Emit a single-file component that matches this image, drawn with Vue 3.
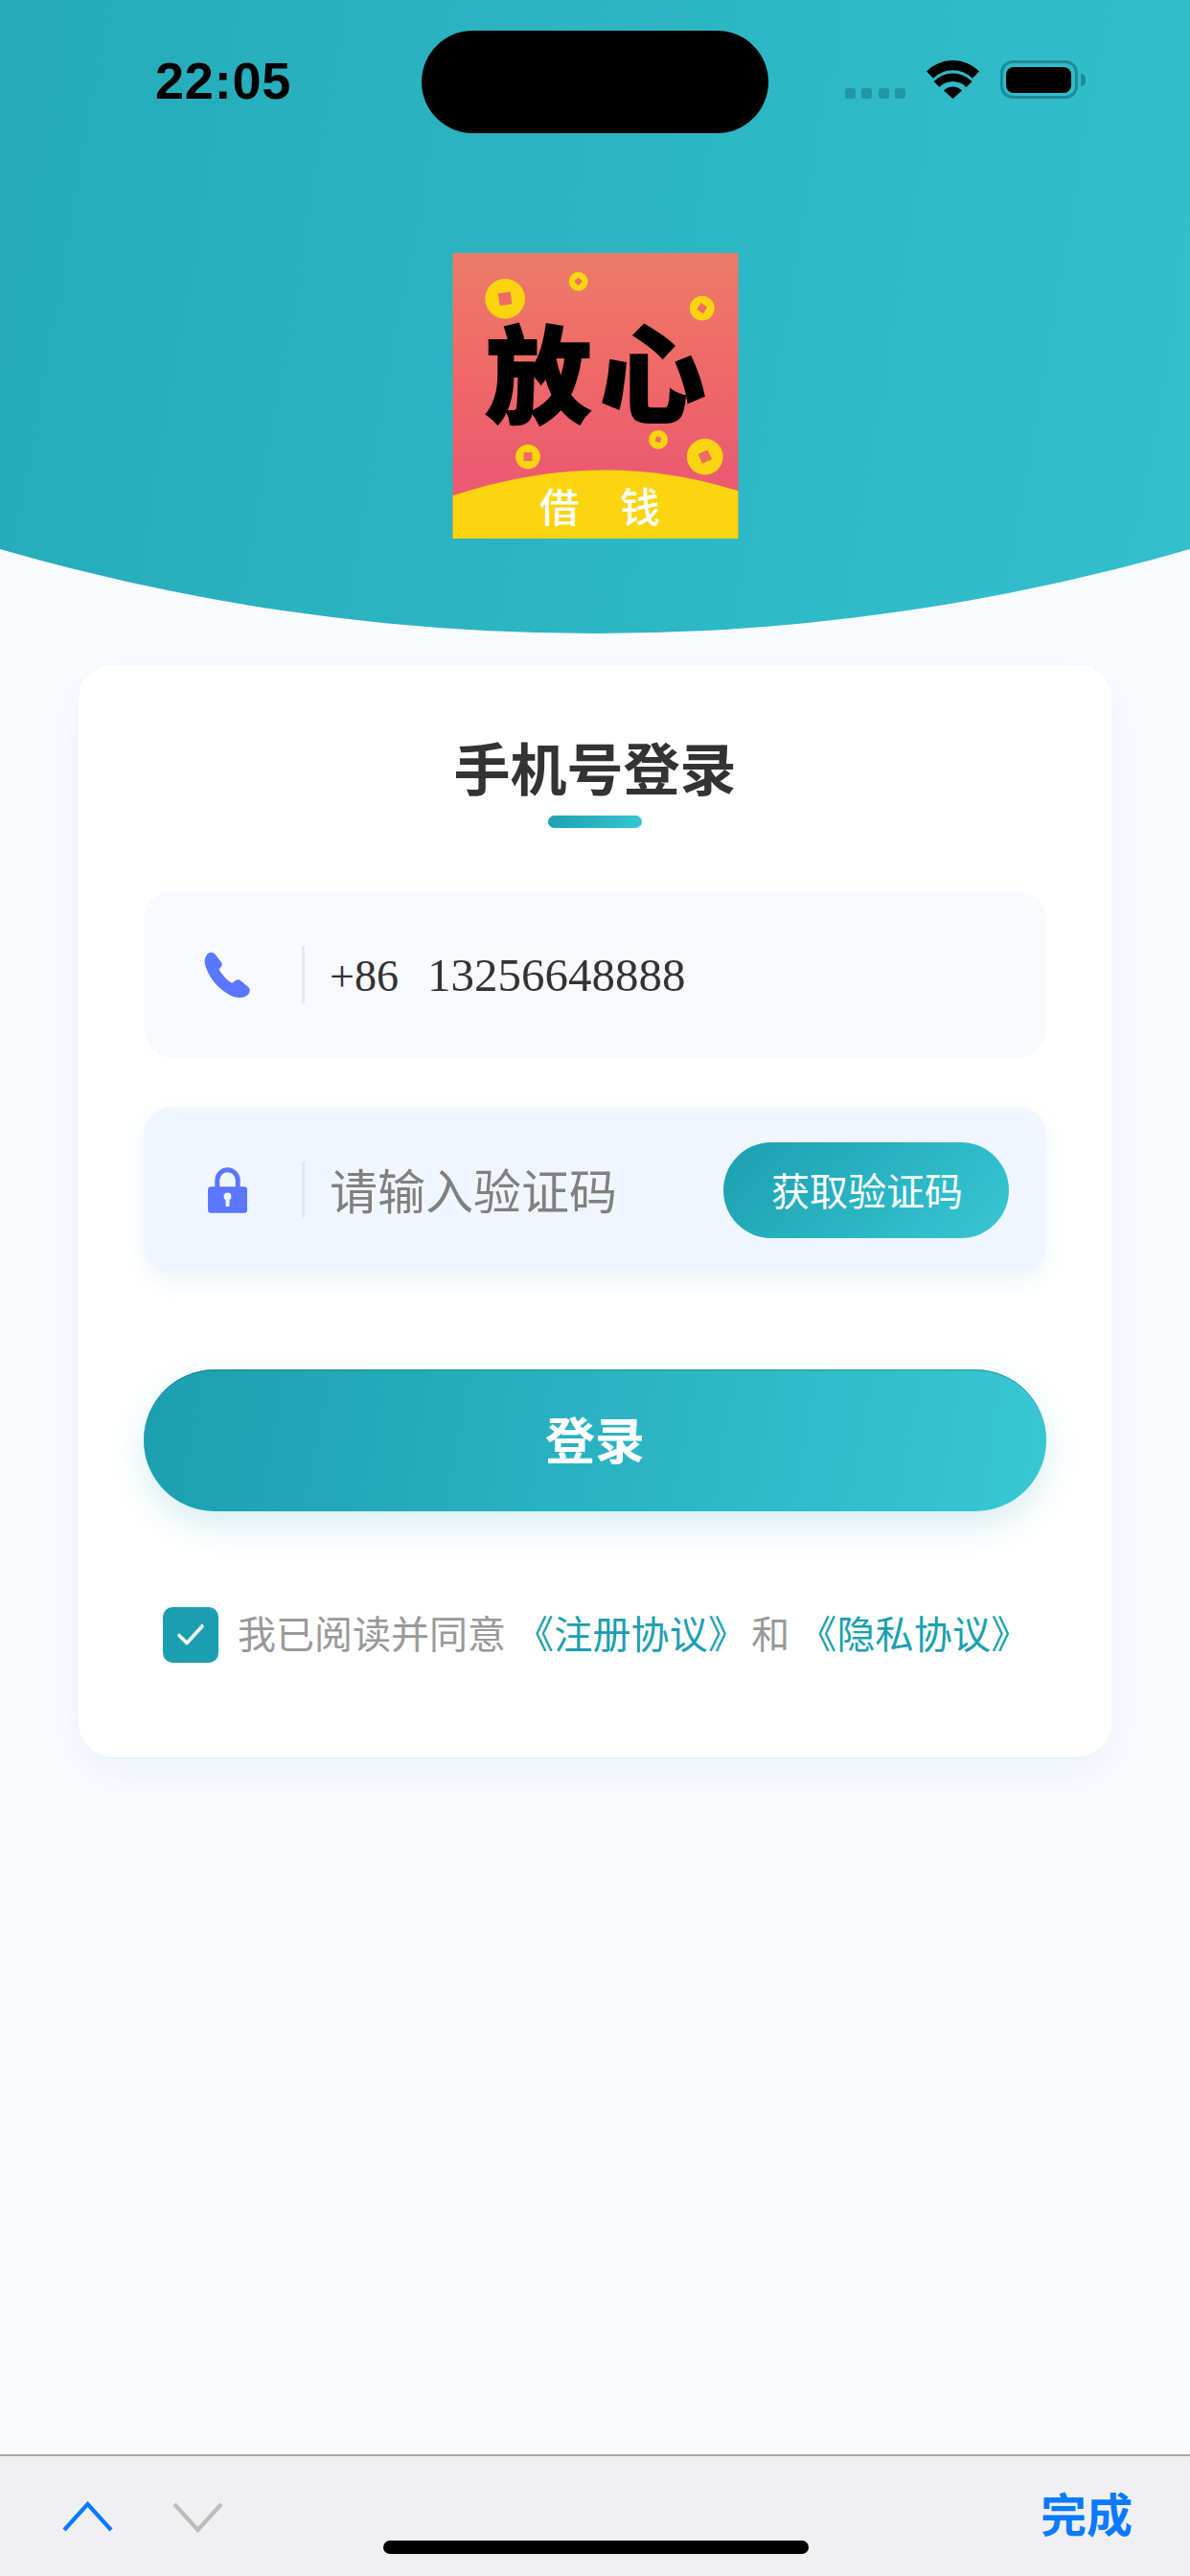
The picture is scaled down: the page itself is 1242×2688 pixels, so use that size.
<template>
  <div class="page">
    <header class="hero">
      <div class="status-bar">
        <span class="time">22:05</span>
        <div class="island"></div>
        <div class="status-icons">
          <div class="signal">
            <i v-for="n in 4" :key="n"></i>
          </div>
          <svg class="wifi" width="55" height="40" viewBox="0 0 55 40">
            <path d="M0 11.5A38.6 38.6 0 0 1 55 11.5L48 18.7A29 29 0 0 0 7 18.7Z" />
            <path d="M7.5 22A28 28 0 0 1 47.5 22L41.5 28A19.5 19.5 0 0 0 13.5 28Z" />
            <path d="M18 31.5A13.5 13.5 0 0 1 37 31.5L27.5 40Z" />
          </svg>
          <div class="battery"><div class="battery-level"></div></div>
          <div class="battery-cap"></div>
        </div>
      </div>

      <!-- app logo -->
      <svg class="logo" width="299" height="298" viewBox="0 0 300 300">
        <defs>
          <linearGradient id="logoBg" x1="0" y1="0" x2="0" y2="1">
            <stop offset="0" stop-color="#ec7b68" />
            <stop offset="0.35" stop-color="#ef6c66" />
            <stop offset="0.75" stop-color="#ec5b70" />
            <stop offset="1" stop-color="#ec5b70" />
          </linearGradient>
        </defs>
        <rect width="300" height="300" fill="url(#logoBg)" />
        <g v-for="coin in coins" :key="coin.x">
          <circle :cx="coin.x" :cy="coin.y" :r="coin.r" fill="#fad40e" />
          <rect
            :x="coin.x - coin.hole / 2"
            :y="coin.y - coin.hole / 2"
            :width="coin.hole"
            :height="coin.hole"
            :transform="`rotate(${coin.rot} ${coin.x} ${coin.y})`"
            fill="#ee6b68"
          />
        </g>
        <text class="logo-big" x="90" y="170">放</text>
        <text class="logo-big" x="210" y="170">心</text>
        <path d="M0 255Q155 203.5 300 250V300H0Z" fill="#fad40e" />
        <text class="logo-small" x="112" y="283">借</text>
        <text class="logo-small" x="197" y="283">钱</text>
      </svg>
    </header>

    <main class="content">
      <section class="card">
        <h1 class="title">手机号登录</h1>
        <div class="title-bar"></div>

        <div class="field">
          <div class="field-icon">
            <svg width="49" height="49" viewBox="100 100 148 148">
              <path
                d="M118 103C128 100 135 108 140 115L155 135C160 142 152 150 147 155C155 172 172 190 188 200C195 193 205 185 213 190L238 210C248 218 245 232 235 238C225 245 210 247 195 243C150 225 115 185 103 140C100 125 105 108 118 103Z"
                fill="#5b76ff"
              />
            </svg>
          </div>
          <div class="field-line"></div>
          <span class="phone-text"><span class="dial-code">+86</span>13256648888</span>
        </div>

        <div class="field field-active">
          <div class="field-icon">
            <svg width="41" height="48" viewBox="111 775 124 143">
              <path d="M140.5 840V815A32.5 32.5 0 0 1 205.5 815V840" fill="none" stroke="#5b76ff" stroke-width="15" />
              <rect x="111" y="835" width="124" height="83" rx="9" fill="#5b76ff" />
              <circle cx="173" cy="866" r="12" fill="#f0f6ff" />
              <rect x="167" y="868" width="12" height="30" rx="3" fill="#f0f6ff" />
            </svg>
          </div>
          <div class="field-line"></div>
          <span class="placeholder">请输入验证码</span>
          <button class="code-btn" type="button">获取验证码</button>
        </div>

        <button class="login-btn" type="button">登录</button>

        <div class="agreement">
          <div class="checkbox">
            <svg width="30" height="24" viewBox="0 0 30 24">
              <path d="M3 12.5L11 20.5L27 3" fill="none" stroke="#fff" stroke-width="3.6" stroke-linecap="round" stroke-linejoin="round" />
            </svg>
          </div>
          <p class="agreement-text">
            <span>我已阅读并同意</span>
            <a class="doc-link first">《注册协议》</a>
            <span class="and">和</span>
            <a class="doc-link second">《隐私协议》</a>
          </p>
        </div>
      </section>
    </main>

    <footer class="toolbar">
      <svg class="arrow" width="53" height="32" viewBox="0 0 53 32">
        <path d="M2 30L26.5 3L51 30" fill="none" stroke="#0a7aff" stroke-width="4.2" />
      </svg>
      <svg class="arrow arrow-down" width="53" height="32" viewBox="0 0 53 32">
        <path d="M2 2L26.5 29L51 2" fill="none" stroke="#bcbcbc" stroke-width="4.2" />
      </svg>
      <span class="done">完成</span>
      <div class="home-bar"></div>
    </footer>
  </div>
</template>

<script setup>
const coins = [
  { x: 55, y: 48, r: 21, hole: 13, rot: -8 },
  { x: 132, y: 30, r: 10, hole: 6, rot: 45 },
  { x: 262, y: 58, r: 13, hole: 8, rot: 35 },
  { x: 216, y: 196, r: 10, hole: 5.5, rot: 15 },
  { x: 265, y: 214, r: 19, hole: 11, rot: -25 },
  { x: 79, y: 214, r: 13, hole: 9, rot: 0 }
]
</script>

<style>
html,
body {
  margin: 0;
  background: #f9fbff;
}
</style>

<style scoped>
.page {
  display: flex;
  flex-direction: column;
  width: 1242px;
  height: 2688px;
  background: #f9fbff;
  font-family: "Noto Sans CJK SC", "Noto Sans", sans-serif;
}

.hero {
  display: flex;
  flex-direction: column;
  align-items: center;
  height: 661px;
  flex-shrink: 0;
  background: linear-gradient(100deg, #25abb9, #32c0cd);
  clip-path: circle(2235px at 621px -1574px);
}

.status-bar {
  display: flex;
  align-items: flex-start;
  width: 100%;
  height: 139px;
  padding: 32px 0 0 162px;
  box-sizing: border-box;
}

.time {
  width: 278px;
  margin-top: 21px;
  font-family: "Liberation Sans", sans-serif;
  font-size: 54px;
  font-weight: 700;
  line-height: 62px;
  letter-spacing: 0.8px;
  color: #000;
}

.island {
  width: 362px;
  height: 107px;
  border-radius: 54px;
  background: #000;
}

.status-icons {
  display: flex;
  align-items: flex-start;
  margin: 31px 0 0 80px;
}

.signal {
  display: flex;
  gap: 6.3px;
  margin: 29px 22px 0 0;
}

.signal i {
  display: block;
  width: 11px;
  height: 11px;
  border-radius: 3px;
  background: #2295a5;
}

.wifi path {
  fill: #000;
}

.battery {
  width: 81px;
  height: 40px;
  margin-left: 22px;
  padding: 3.5px;
  box-sizing: border-box;
  border: 3px solid #1f8a9a;
  border-radius: 13px;
}

.battery-level {
  width: 100%;
  height: 100%;
  border-radius: 8px;
  background: #000;
}

.battery-cap {
  width: 5px;
  height: 13px;
  margin: 14px 0 0 3px;
  border-radius: 0 6px 6px 0;
  background: #1f8a9a;
}

.logo {
  display: block;
  margin-top: 125px;
}

.logo-big {
  font-size: 111px;
  font-weight: 900;
  text-anchor: middle;
  fill: #000;
  stroke: #000;
  stroke-width: 2px;
}

.logo-small {
  font-size: 42px;
  font-weight: 500;
  text-anchor: middle;
  fill: #fff;
}

.content {
  flex: 1;
  padding: 33px 82px 0;
}

.card {
  height: 1139px;
  padding: 66px 68px 0;
  box-sizing: border-box;
  border-radius: 36px;
  background: #fff;
  box-shadow: 0 16px 48px rgba(60, 130, 180, 0.07);
}

.title {
  margin: 0;
  font-size: 59px;
  font-weight: 700;
  line-height: 80px;
  text-align: center;
  color: #333;
}

.title-bar {
  width: 98px;
  height: 13px;
  margin: 11px auto 66px;
  border-radius: 7px;
  background: linear-gradient(90deg, #1da2b2, #35c5d2);
}

.field {
  display: flex;
  align-items: center;
  height: 174px;
  padding: 0 39px 0 59px;
  border-radius: 30px;
  background: #f9faff;
}

.field-active {
  margin-top: 51px;
  background: #f0f6ff;
  box-shadow: 0 8px 22px rgba(30, 150, 180, 0.09);
}

.field-icon {
  display: flex;
  justify-content: center;
  width: 57px;
}

.field-line {
  width: 3px;
  height: 60px;
  margin: 0 26px 0 49px;
  background: #e3e8f2;
}

.phone-text {
  font-family: "Liberation Serif", serif;
  font-size: 49px;
  color: #333;
}

.dial-code {
  margin-right: 30px;
  font-size: 46px;
}

.placeholder {
  flex: 1;
  padding-bottom: 4px;
  font-size: 50px;
  color: #808080;
}

.code-btn {
  width: 298px;
  height: 100px;
  padding: 0 0 3px 2px;
  border: 0;
  border-radius: 50px;
  font-family: inherit;
  font-size: 40px;
  color: #fff;
  background: linear-gradient(135deg, #1b9fb0, #38c7d4);
}

.login-btn {
  display: block;
  width: 100%;
  height: 148px;
  margin-top: 100px;
  padding: 0 0 6px;
  border: 0;
  border-radius: 74px;
  font-family: inherit;
  font-size: 52px;
  font-weight: 700;
  color: #fff;
  background: linear-gradient(100deg, #1b9fb0, #38c7d4);
  box-shadow: 0 14px 34px rgba(30, 160, 180, 0.18), inset 0 1px 0 rgba(10, 90, 110, 0.45);
}

.agreement {
  display: flex;
  align-items: center;
  margin: 100px 0 0 20px;
}

.checkbox {
  display: flex;
  align-items: center;
  justify-content: center;
  width: 58px;
  height: 58px;
  flex-shrink: 0;
  border-radius: 10px;
  background: #1b9fb0;
}

.agreement-text {
  display: flex;
  margin: 0 0 0 20px;
  padding-bottom: 7px;
  font-size: 40px;
  line-height: 48px;
  white-space: nowrap;
  color: #999;
}

.doc-link {
  letter-spacing: 0.2px;
  color: #1b9fb0;
}

.first {
  margin-left: 10px;
}

.and {
  margin-left: 5px;
}

.second {
  margin-left: 9px;
}

.toolbar {
  position: relative;
  display: flex;
  align-items: flex-start;
  height: 127px;
  box-sizing: border-box;
  padding: 47px 60px 0 65px;
  border-top: 2px solid #a6a6a6;
  background: #f0f0f2;
}

.arrow-down {
  margin: 1px 0 0 62px;
}

.done {
  margin: -24px 0 0 auto;
  font-size: 48px;
  font-weight: 700;
  color: #0a7aff;
}

.home-bar {
  position: absolute;
  left: 400px;
  bottom: 23px;
  width: 444px;
  height: 14px;
  border-radius: 7px;
  background: #000;
}
</style>
